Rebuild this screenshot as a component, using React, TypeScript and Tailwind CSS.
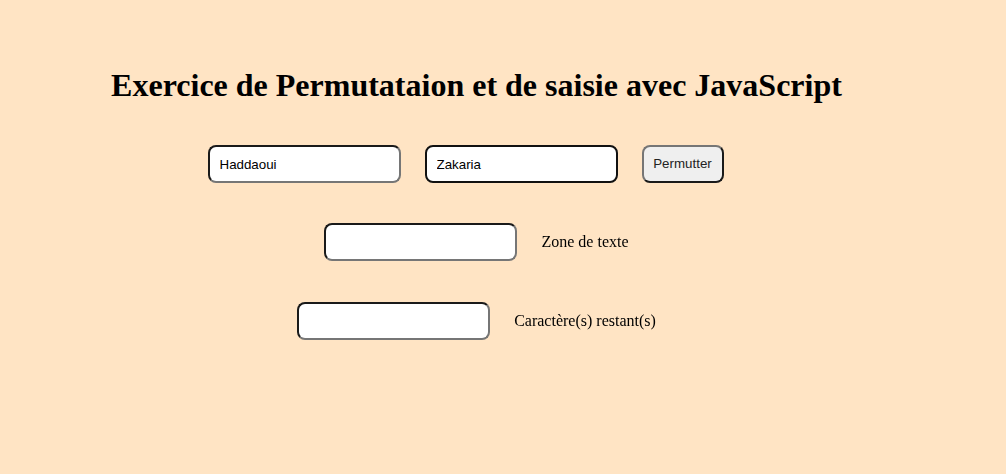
import React, { useState } from "react";

export default function App() {
    const [nom, setNom] = useState("Haddaoui");
    const [prenom, setPrenom] = useState("Zakaria");
    const [texte, setTexte] = useState("");
    const [restant, setRestant] = useState("");

    const permuter = () => {
        setNom(prenom);
        setPrenom(nom);
    };

    const inputCls =
        "w-[193px] h-[38px] rounded-[8px] border-2 border-t-[#1a1a1a] border-l-[#1a1a1a] border-b-[#767676] border-r-[#767676] bg-white px-[10px] text-[13.33px] text-black outline-none font-['Liberation_Sans',Arial,sans-serif]";

    return (
        <div className="w-full h-[474px] bg-[#ffe4c4] font-['Liberation_Serif','Times_New_Roman',serif] text-black">
            <div className="w-[953px] flex flex-col items-center pt-[67px]">
                <h1 className="text-[32px] font-bold leading-[37px]">
                    Exercice de Permutataion et de saisie avec JavaScript
                </h1>

                <div className="mt-[41px] mr-[22px] flex items-center gap-[24px]">
                    <input className={inputCls} value={nom} onChange={(e) => setNom(e.target.value)} />
                    <input
                        autoFocus
                        className={inputCls + " !border-[#111] caret-black"}
                        value={prenom}
                        onChange={(e) => setPrenom(e.target.value)}
                    />
                    <button
                        onClick={permuter}
                        className="w-[82px] h-[38px] rounded-[8px] border-2 border-t-[#767676] border-l-[#767676] border-b-[#1a1a1a] border-r-[#1a1a1a] bg-[#efefef] text-[13.33px] text-[#222] font-['Liberation_Sans',Arial,sans-serif]"
                    >
                        Permutter
                    </button>
                </div>

                <div className="mt-[40px] flex items-center gap-[24px]">
                    <input className={inputCls} value={texte} onChange={(e) => setTexte(e.target.value)} />
                    <span className="text-[16px]">Zone de texte</span>
                </div>

                <div className="mt-[41px] flex items-center gap-[24px]">
                    <input className={inputCls} value={restant} onChange={(e) => setRestant(e.target.value)} />
                    <span className="text-[16px]">Caractère(s) restant(s)</span>
                </div>
            </div>
        </div>
    );
}
